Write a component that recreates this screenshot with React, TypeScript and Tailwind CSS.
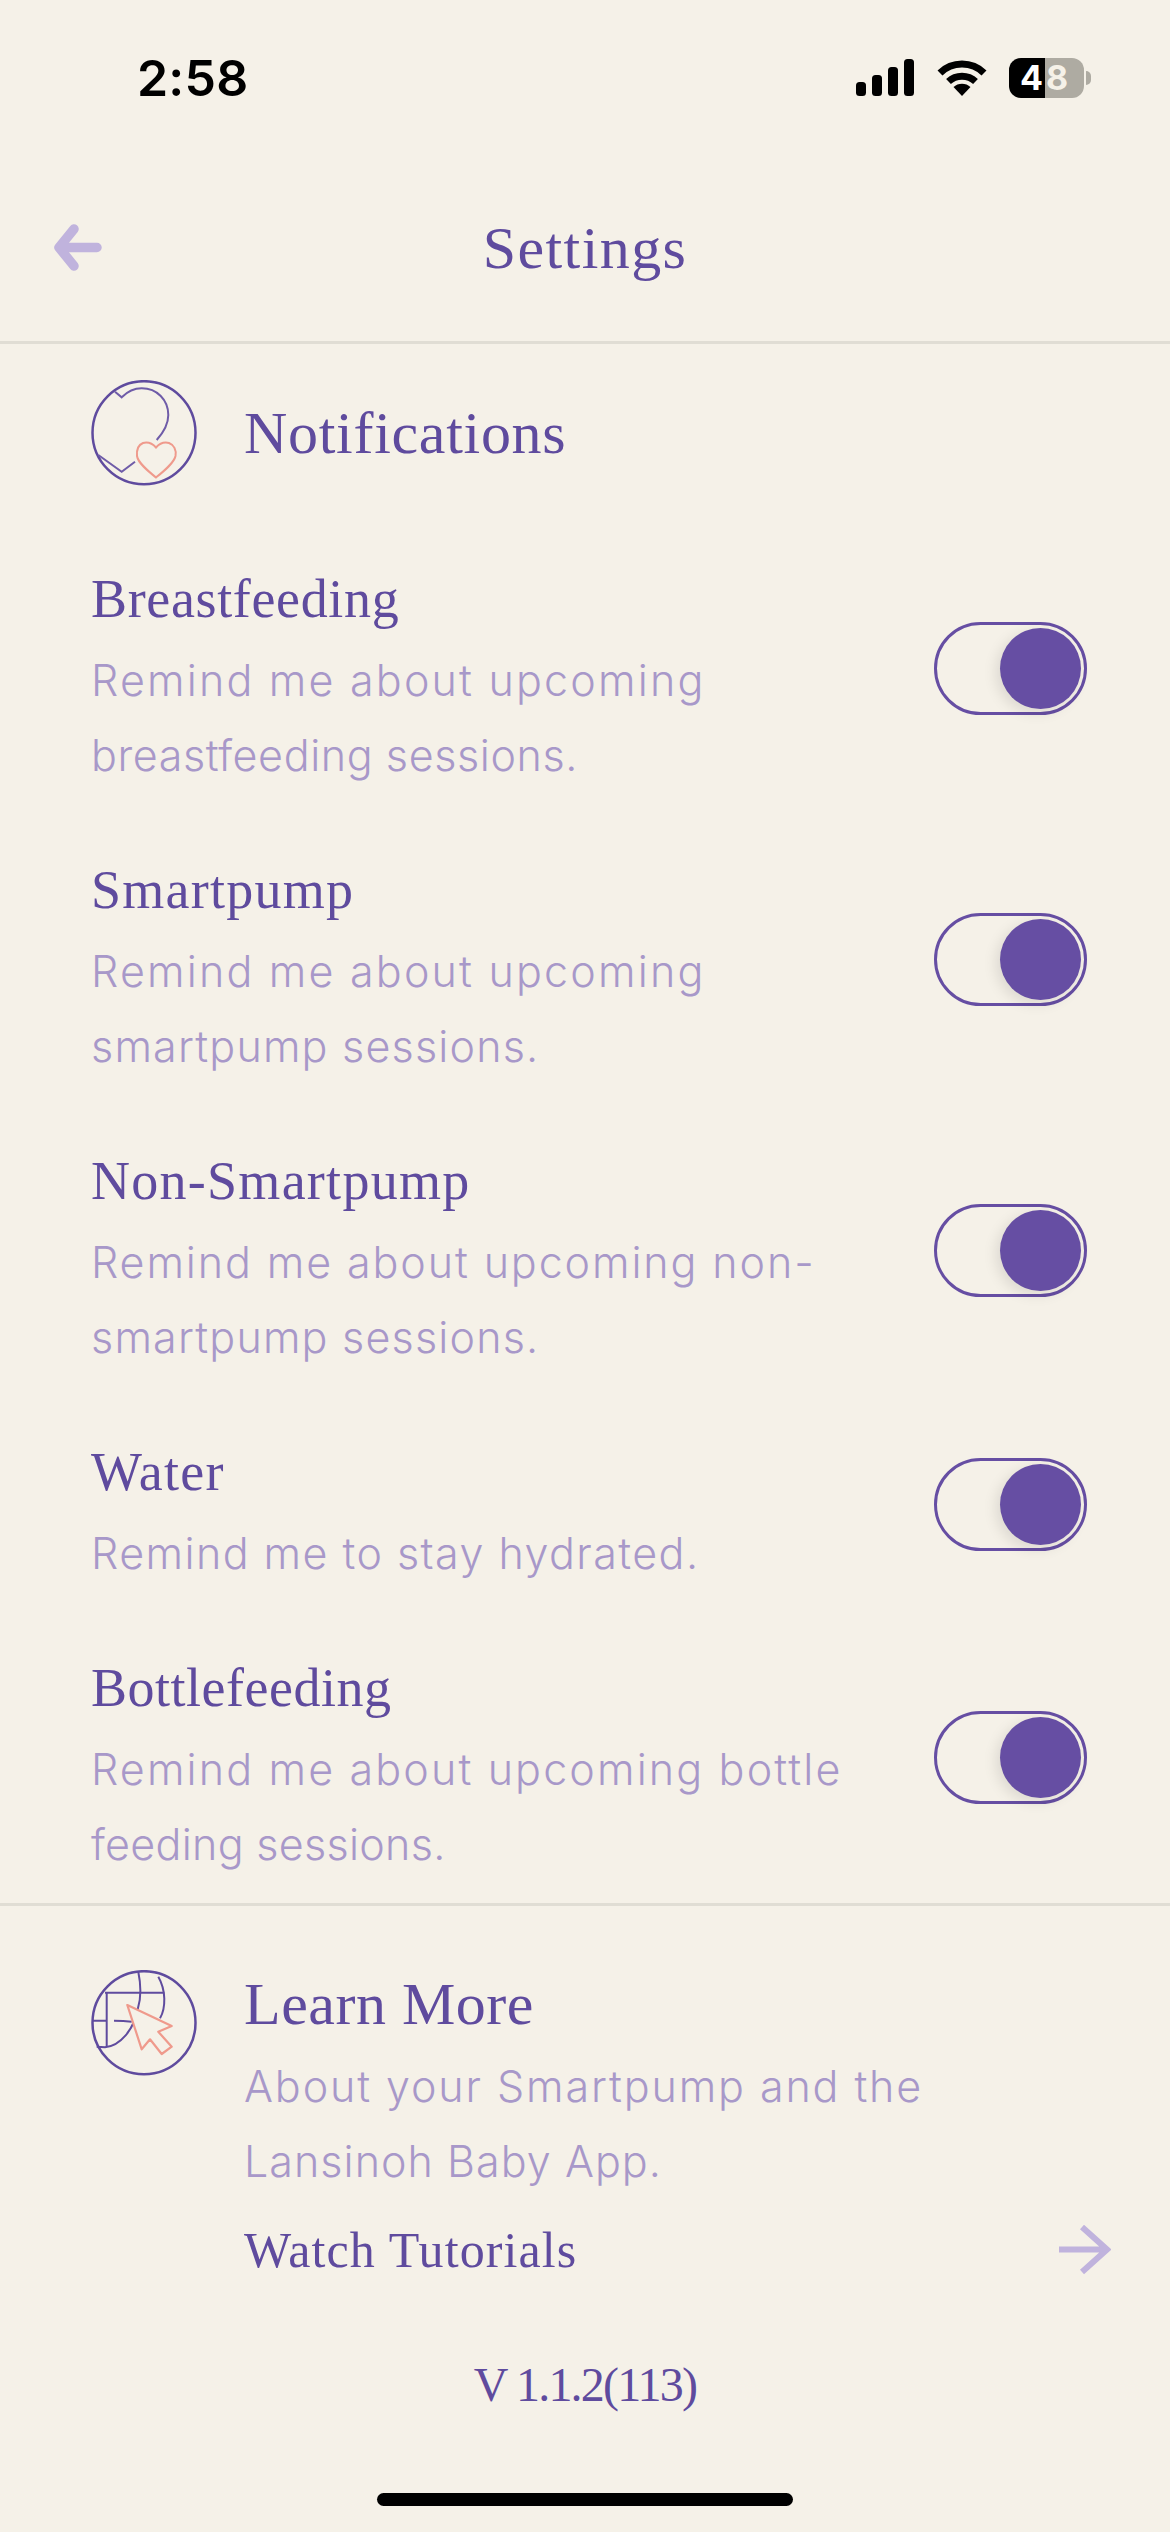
import React from "react";

const serif = "font-['Liberation_Serif',serif]";
const sans = "font-['Inter',sans-serif]";

type Line = { t: string; c: string };

function Toggle() {
  return (
    <div className="w-[153px] h-[93px] rounded-full border-[3px] border-[#664ea3] flex items-center justify-end pr-[3px] shrink-0">
      <div className="w-[81px] h-[81px] rounded-full bg-[#664ea3] shadow-[-4px_4px_14px_rgba(0,0,0,0.10)]" />
    </div>
  );
}

function Row({ title, track, lines }: { title: string; track: string; lines: Line[] }) {
  return (
    <div className="flex items-center justify-between pl-[91px] pr-[83px]">
      <div className="pt-[40px] pb-[21px]">
        <div className={`${serif} h-[70px] leading-[73px] text-[54px] text-[#5f4b9e] ${track}`}>{title}</div>
        <div className={`${sans} mt-[10px] text-[43px] leading-[75px] font-light text-[#a898c9] whitespace-nowrap`}>
          {lines.map((l) => (
            <div key={l.t} className={l.c}>{l.t}</div>
          ))}
        </div>
      </div>
      <Toggle />
    </div>
  );
}

function StatusIcons() {
  return (
    <div className="flex items-center">
      <svg width="58" height="38" viewBox="0 0 58 38" className="block">
        <rect x="0" y="23" width="10" height="14" rx="3.5" fill="#000" />
        <rect x="16" y="16" width="10" height="21" rx="3.5" fill="#000" />
        <rect x="32" y="8" width="10" height="29" rx="3.5" fill="#000" />
        <rect x="48" y="0" width="10" height="37" rx="3.5" fill="#000" />
      </svg>
      <svg width="50" height="38" viewBox="0 0 50 38" className="block ml-[23px]">
        <path d="M3 14 C15 2 35 2 47 14" fill="none" stroke="#000" strokeWidth="7" strokeLinejoin="round" />
        <path d="M11.5 22.5 C19 15.5 31 15.5 38.500 22.500" fill="none" stroke="#000" strokeWidth="7" />
        <path d="M16.500 28 C21 23.500 29 23.500 33.500 28 L25 37 Z" fill="#000" />
      </svg>
      <div className="ml-[22px] w-[75px] h-[40px] rounded-[12px] overflow-hidden flex text-[34px] font-bold leading-[40px] font-['Inter',sans-serif]">
        <div className="w-[36px] bg-black text-white text-right pr-[2px]">4</div>
        <div className="flex-1 bg-[#aeaba2] text-[#f5f1e8] text-left pl-[1px]">8</div>
      </div>
      <div className="ml-[2px] w-[5px] h-[14px] rounded-r-full bg-[#aeaba2]" />
    </div>
  );
}

export default function App() {
  return (
    <div className="w-[1170px] h-[2532px] bg-[#f5f1e8] flex flex-col overflow-hidden">
      <div className="h-[156px] flex items-center justify-between pl-[137px] pr-[79px]">
        <div className="font-['Inter',sans-serif] text-[50px] font-semibold text-black tracking-[0.2px]">2:58</div>
        <StatusIcons />
      </div>

      <div className="h-[188px] border-b-[3px] border-[#e0ddd4] relative flex items-center justify-center pb-[2px]">
        <svg width="50" height="50" viewBox="0 0 50 50" className="absolute left-[52px] top-[67px]">
          <path d="M45 24.500 H8 M22 6 L7 24.500 L22 43" fill="none" stroke="#c0b3dd" strokeWidth="9.500" strokeLinecap="round" strokeLinejoin="round" />
        </svg>
        <div className={`${serif} text-[60px] text-[#5f4b9e] tracking-[1.4px]`}>Settings</div>
      </div>

      <div className="flex items-center pl-[91px] mt-[36px] mb-[37px] gap-[47px]">
        <svg width="106" height="106" viewBox="21 20 106 106" className="shrink-0">
          <circle cx="74" cy="72.700" r="51.500" fill="none" stroke="#5f4b9e" strokeWidth="2.500" />
          <path d="M45 31.700 L51.700 37.300 C58 31 65 28.300 71.700 28.300 C87 28.300 98.300 40 98.300 55 C98.300 65 93 73 86.700 80" fill="none" stroke="#6f5ca8" strokeWidth="2" />
          <path d="M28.300 95 L51.700 111.700 L65 101.700" fill="none" stroke="#6f5ca8" strokeWidth="2" />
          <path d="M86 87.500 C82 83 77 82 73 83 C68 85 66.500 90 67 96 C68 103 78 111 86 117.500 C94 111 104 103 105.500 96 C106.500 90 104 85 99 83 C95 82 90 83 86 87.500Z" fill="none" stroke="#ef9a8c" strokeWidth="2" />
        </svg>
        <div className={`${serif} text-[60px] text-[#5f4b9e] tracking-[0.7px] leading-none`}>Notifications</div>
      </div>

      <Row
        title="Breastfeeding"
        track="tracking-[0.65px]"
        lines={[
          { t: "Remind me about upcoming", c: "tracking-[2.2px]" },
          { t: "breastfeeding sessions.", c: "tracking-[0.6px]" },
        ]}
      />
      <Row
        title="Smartpump"
        track="tracking-[1.25px]"
        lines={[
          { t: "Remind me about upcoming", c: "tracking-[2.2px]" },
          { t: "smartpump sessions.", c: "tracking-[1.2px]" },
        ]}
      />
      <Row
        title="Non-Smartpump"
        track="tracking-[1.27px]"
        lines={[
          { t: "Remind me about upcoming non-", c: "tracking-[1.9px]" },
          { t: "smartpump sessions.", c: "tracking-[1.2px]" },
        ]}
      />
      <Row title="Water" track="tracking-[1.2px]" lines={[{ t: "Remind me to stay hydrated.", c: "tracking-[1.45px]" }]} />
      <Row
        title="Bottlefeeding"
        track="tracking-[0.5px]"
        lines={[
          { t: "Remind me about upcoming bottle", c: "tracking-[2.15px]" },
          { t: "feeding sessions.", c: "tracking-[0.3px]" },
        ]}
      />

      <div className="border-t-[3px] border-[#e0ddd4] flex pl-[91px] pt-[64px] gap-[47px]">
        <svg width="106" height="106" viewBox="21 20 106 106" className="shrink-0">
          <circle cx="74" cy="72.700" r="51.500" fill="none" stroke="#5f4b9e" strokeWidth="2.500" />
          <path d="M68.300 21.700 C71 35 71 48 68 58 C64 80 50 96 35 97.300 L26.700 96.700" fill="none" stroke="#5f4b9e" strokeWidth="2" />
          <path d="M88.300 26.700 C96 40 96 58 90 68.300" fill="none" stroke="#5f4b9e" strokeWidth="2" />
          <path d="M35 42.700 H94.300 M36.700 42.700 V96.700 M22.700 70.700 H36.700 M44 70.700 C50 70.700 56 71 61.700 71.700" fill="none" stroke="#5f4b9e" strokeWidth="2" />
          <path d="M57.300 55 L101.700 76 L88.300 81.700 L101.700 96.700 L91.700 104 L80 89.300 L71.700 99.300 Z" fill="#f5f1e8" stroke="#ef9a8c" strokeWidth="2.200" strokeLinejoin="round" />
        </svg>
        <div className="flex-1 pr-[59px]">
          <div className={`${serif} text-[60px] leading-[70px] text-[#5f4b9e] tracking-[0.5px] -mt-[1px]`}>Learn More</div>
          <div className={`${sans} mt-[10px] text-[43px] leading-[75px] font-light text-[#a898c9] whitespace-nowrap`}>
            <div className="tracking-[1.9px]">About your Smartpump and the</div>
            <div className="tracking-[1.05px]">Lansinoh Baby App.</div>
          </div>
          <div className="flex items-center justify-between mt-[25px]">
            <div className={`${serif} text-[50px] leading-[52px] text-[#5f4b9e] tracking-[1.1px]`}>Watch Tutorials</div>
            <svg width="52" height="50" viewBox="0 0 52 50">
              <path d="M0 24.500 H48 M23 2 L48 24.500 L23 47" fill="none" stroke="#c0b3dd" strokeWidth="6" />
            </svg>
          </div>
        </div>
      </div>

      <div className={`${serif} text-center text-[48px] leading-[60px] text-[#5f4b9e] tracking-[-1.8px] mt-[79px]`}>V 1.1.2(113)</div>
      <div className="mt-auto mb-[26px] mx-auto w-[416px] h-[13px] rounded-full bg-black" />
    </div>
  );
}
